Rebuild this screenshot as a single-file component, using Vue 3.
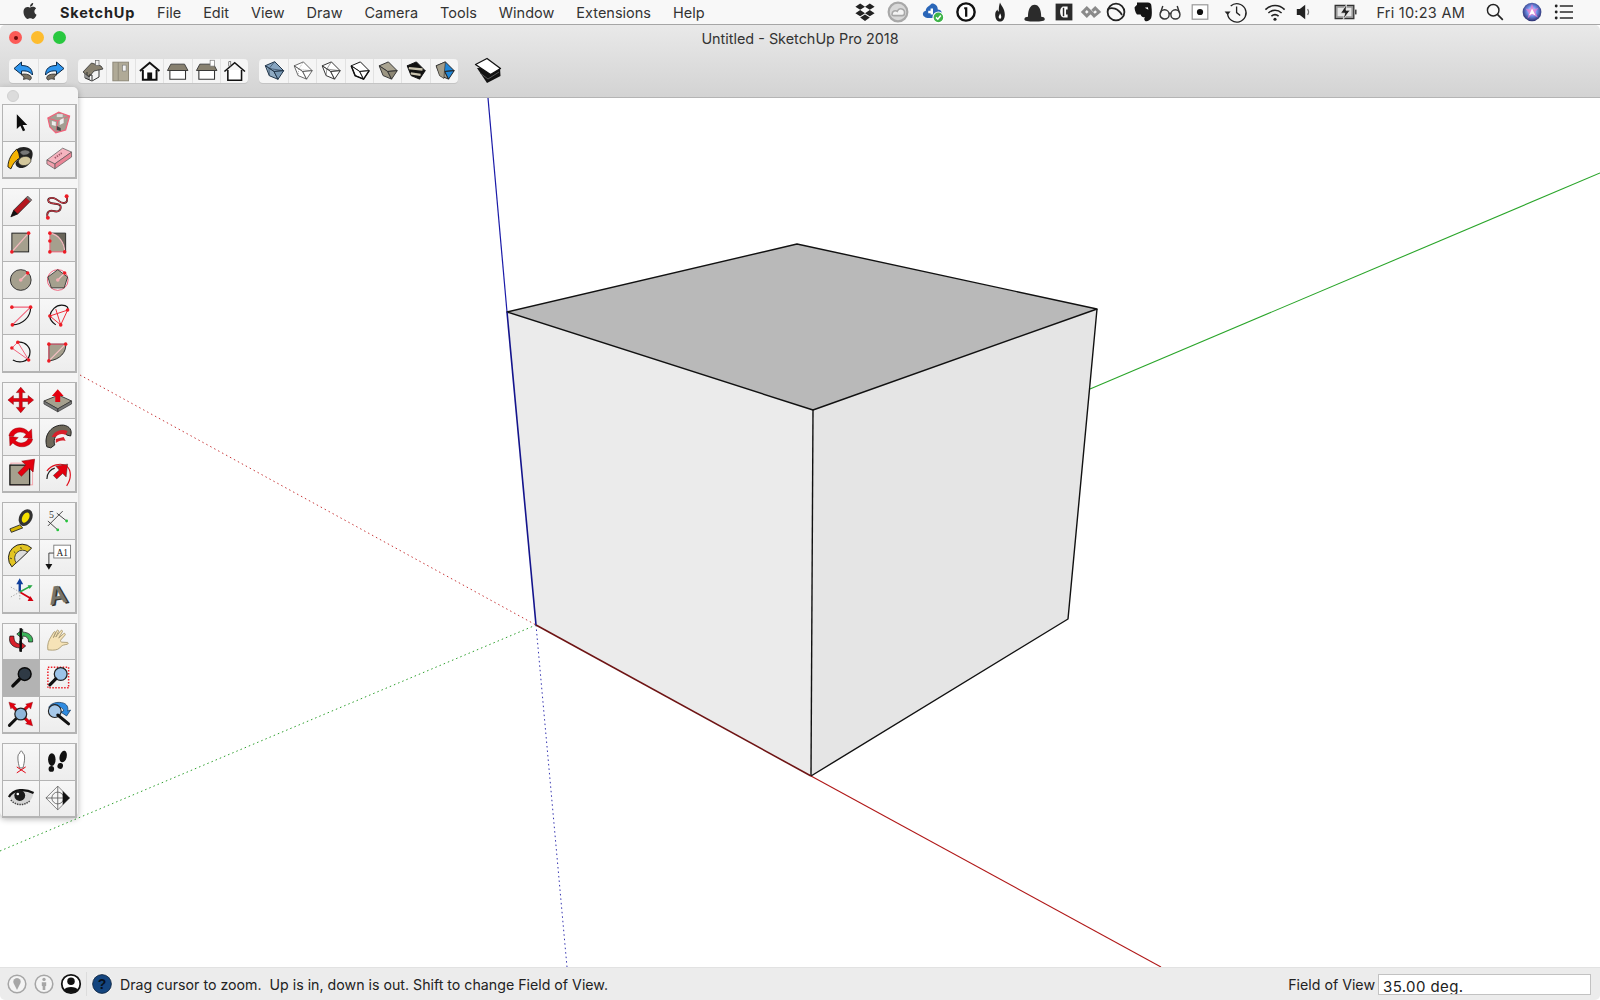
<template>
  <div class="screen">
    <div class="menubar">
      <svg class="apple" viewBox="0 0 24 24"><path :d="applePath" /></svg>
      <span class="menu-app">SketchUp</span>
      <span v-for="m in menus" :key="m" class="menu-item">{{ m }}</span>
      <div class="menu-right">
        <span v-for="s in statusIcons" :key="s.id" class="status-slot" :style="{ width: s.w + 'px' }">
          <svg viewBox="0 0 20 20" width="24" height="24" v-html="s.svg"></svg>
        </span>
        <span class="clock">Fri 10:23 AM</span>
        <span v-for="s in endIcons" :key="s.id" class="status-slot" :style="{ width: s.w + 'px' }">
          <svg viewBox="0 0 20 20" width="24" height="24" v-html="s.svg"></svg>
        </span>
      </div>
    </div>

    <div class="window-head">
      <div class="titlebar">
        <div class="lights">
          <span class="light red"><i></i></span>
          <span class="light yellow"></span>
          <span class="light green"></span>
        </div>
        <div class="title">Untitled - SketchUp Pro 2018</div>
      </div>
      <div class="toolbar">
        <div v-for="(g, i) in toolbarGroups" :key="i" class="tb-group">
          <button v-for="b in g" :key="b.id" class="tb-btn">
            <svg viewBox="0 0 28 24" width="28" height="24" v-html="b.svg"></svg>
          </button>
        </div>
        <svg class="shadow-toggle" viewBox="0 0 30 28" width="30" height="28" v-html="shadowIcon"></svg>
      </div>
    </div>

    <div class="canvas">
      <svg class="scene" viewBox="0 98 1600 869" width="1600" height="869">
        <line x1="80" y1="375" x2="536" y2="625" stroke="#c8383a" stroke-width="1" stroke-dasharray="1.5 3" />
        <line x1="0" y1="851" x2="536" y2="625" stroke="#2ca02c" stroke-width="1" stroke-dasharray="1.5 3" />
        <line x1="536" y1="625" x2="567" y2="967" stroke="#3333b0" stroke-width="1" stroke-dasharray="1.5 3" />
        <line x1="488" y1="98" x2="507" y2="312" stroke="#1a1aa8" stroke-width="1.2" />
        <line x1="1090" y1="389" x2="1600" y2="173" stroke="#2aa52a" stroke-width="1.1" />
        <line x1="811" y1="776" x2="1161" y2="967" stroke="#b01818" stroke-width="1.1" />
        <polygon points="507,312 813,410 811,776 536,625" fill="#ebebeb" />
        <polygon points="813,410 1097,309 1068,619 811,776" fill="#e5e5e5" />
        <polygon points="507,312 797,244 1097,309 813,410" fill="#b9b9b9" />
        <g fill="none" stroke="#111" stroke-width="1.4" stroke-linejoin="round">
          <polygon points="507,312 797,244 1097,309 813,410" />
          <line x1="813" y1="410" x2="811" y2="776" />
          <polyline points="1097,309 1068,619 811,776" />
        </g>
        <line x1="507" y1="312" x2="536" y2="625" stroke="#14148c" stroke-width="1.6" />
        <line x1="536" y1="625" x2="811" y2="776" stroke="#6e1414" stroke-width="1.6" />
      </svg>
    </div>

    <div class="statusbar">
      <div class="status-icons">
        <svg viewBox="0 0 20 20" width="22" height="22">
          <circle cx="10" cy="10" r="8" fill="#f4f4f4" stroke="#a6a6a6" stroke-width="1.4" />
          <path d="M10 15.5 L6.8 9 A3.4 3.4 0 1 1 13.2 9Z" fill="#a6a6a6" />
        </svg>
        <svg viewBox="0 0 20 20" width="22" height="22">
          <circle cx="10" cy="10" r="8" fill="#f4f4f4" stroke="#a6a6a6" stroke-width="1.4" />
          <circle cx="10" cy="5.8" r="1.5" fill="#a6a6a6" />
          <path d="M8 8.5h4v3l-.8.5v3.500H8.800V12L8 11.500Z" fill="#a6a6a6" />
        </svg>
        <svg viewBox="0 0 20 20" width="22" height="22">
          <circle cx="10" cy="10" r="8.4" fill="#fff" stroke="#111" stroke-width="1.6" />
          <circle cx="10" cy="7.4" r="3.4" fill="#111" />
          <path d="M3.6 15.4C5 11.8 15 11.8 16.4 15.4 14 18.8 6 18.8 3.6 15.4Z" fill="#111" />
        </svg>
        <span class="status-sep"></span>
        <svg viewBox="0 0 22 22" width="22" height="22">
          <circle cx="11" cy="11" r="10.6" fill="#f8f8f8" />
          <circle cx="11" cy="11" r="9.4" fill="#14457f" stroke="#0c2037" stroke-width=".8" />
          <text x="11" y="16" text-anchor="middle" font-size="14" font-weight="700" fill="#07101d" font-family="Liberation Sans, sans-serif">?</text>
        </svg>
      </div>
      <span class="status-text">Drag cursor to zoom.&nbsp; Up is in, down is out. Shift to change Field of View.</span>
      <span class="vcb-label">Field of View</span>
      <div class="vcb-input"><span>35.00 deg.</span></div>
    </div>

    <div class="palette">
      <div class="palette-head"><span class="palette-dot"></span></div>
      <div v-for="(g, i) in paletteGroups" :key="i" class="tool-group">
        <button v-for="t in g" :key="t.id" class="tool" :class="{ active: t.active }">
          <svg viewBox="0 0 36 36" width="36" height="36" v-html="t.svg"></svg>
        </button>
      </div>
    </div>
  </div>
</template>

<script setup>
const applePath =
  'M12.152 6.896c-.948 0-2.415-1.078-3.96-1.04-2.04.027-3.91 1.183-4.961 3.014-2.117 3.675-.546 9.103 1.519 12.09 1.013 1.454 2.208 3.09 3.792 3.039 1.52-.065 2.09-.987 3.935-.987 1.831 0 2.35.987 3.96.948 1.637-.026 2.676-1.48 3.676-2.948 1.156-1.688 1.636-3.325 1.662-3.415-.039-.013-3.182-1.221-3.22-4.857-.026-3.04 2.48-4.494 2.597-4.559-1.429-2.09-3.623-2.324-4.39-2.376-2-.156-3.675 1.09-4.61 1.09zM15.53 3.83c.843-1.012 1.4-2.427 1.245-3.83-1.207.052-2.662.805-3.532 1.818-.78.896-1.454 2.338-1.273 3.714 1.338.104 2.715-.688 3.559-1.701'

const menus = ['File', 'Edit', 'View', 'Draw', 'Camera', 'Tools', 'Window', 'Extensions', 'Help']

const statusIcons = [
  { id: 'dropbox', w: 33, svg: '<path fill="#222" d="M6 3l4 2.600L6 8.200 2 5.600zM14 3l4 2.600-4 2.600-4-2.600zM6 8.400l4 2.600-4 2.600-4-2.600zM14 8.400l4 2.600-4 2.600-4-2.600zM6 14.600l4-2.600 4 2.600-4 2.800z"/>' },
  { id: 'cc', w: 35, svg: '<circle cx="10" cy="10" r="7.800" fill="#d8d8d8" stroke="#a8a8a8" stroke-width="1.800"/><path d="M5 12c0-3 3-3.600 4.400-2.600C11 5.600 16 7.400 15.400 11c0 1.400-1 2-2 2H6.600C5.600 13 5 12.600 5 12z" fill="#f4f4f4" stroke="#a8a8a8" stroke-width="1.300"/>' },
  { id: 'cloud', w: 33, svg: '<path fill="#2a66b8" d="M3 14c-2-1-2-4.400 1-5 0-3 3-4 5-6 3 0 5 2 5 5 3 0 4 3 3 5-1 2-3 2-5 2H6c-1 0-2 0-3-1z"/><path fill="#fff" d="M8 7h2v5H8zM6 9h2v2H6z"/><circle cx="14.500" cy="14.500" r="4.500" fill="#3fb44a" stroke="#fff"/><path d="M12.500 14.500l1.500 1.500 2.500-3" fill="none" stroke="#fff" stroke-width="1.300"/>' },
  { id: 'onepass', w: 34, svg: '<circle cx="10" cy="10" r="7.200" fill="#fff" stroke="#111" stroke-width="2"/><path d="M8.500 6h2.600v8H9.200V7.800H8.500z" fill="#111"/>' },
  { id: 'flame', w: 34, svg: '<path fill="#222" d="M10 2c1 3 4 5 4 10 0 4-2 6-4 6s-4-2-4-6c0-2 1-3 2-4 0 2 1 2 1 1 0-2 0-4 1-7z"/><path fill="#fff" d="M10 11c1 2 1.500 3 .6 4.500-1 .6-2-.6-1.600-1.900.3-.8.800-1.400 1-2.600z"/>' },
  { id: 'bowler', w: 30, svg: '<path fill="#2b2b2b" d="M5 14c0-6 2-10 5.500-10S16 8 16 14c1.500 0 3 .7 3 2 0 1.500-3 2-8.500 2S2 17.500 2 16c0-1.300 1.500-2 3-2z"/>' },
  { id: 'cbox', w: 27, svg: '<rect x="3" y="3" width="14" height="14" fill="#2b2b2b"/><path d="M13 5.500H9.500C8 5.500 6.800 7.500 6.800 10s1.200 4.500 2.700 4.500H13v-2.500h-1.300V8H13z" fill="#fff"/><rect x="9" y="6.500" width="1.200" height="7" fill="#2b2b2b"/>' },
  { id: 'chain', w: 25, svg: '<path d="M6.500 5L1.500 10l5 5 3.200-3.200-1.800-1.800L6.500 11.500 5 10l1.500-1.600L12.500 15l6-5-5-5-3.200 3.200 1.800 1.800 1.400-1.500 1.500 1.500-1.800 1.500z" fill="#8a8a8a"/>' },
  { id: 'ring', w: 27, svg: '<circle cx="10" cy="10" r="7" fill="none" stroke="#222" stroke-width="1.500"/><path d="M3.500 7.500c3-1.500 8-.8 11.500 5" fill="none" stroke="#222" stroke-width="1.500"/>' },
  { id: 'evernote', w: 27, svg: '<path fill="#151515" d="M5 2h9c2 0 3 1 3 3 .5 4 .6 8-.2 10-.8 2-3.500 3.200-5 2.400-1-.6-1-2.400 0-3-2 0-3.500-.6-3.800-2.400H5C3.500 10 3 8 3 6l2-2z"/><path fill="#fff" d="M11.500 6.500l2.500-.5.500 2.200z"/>' },
  { id: 'glasses', w: 30, svg: '<g fill="none" stroke="#333" stroke-width="1.200"><circle cx="5.500" cy="12" r="3.800"/><circle cx="14.500" cy="12" r="3.800"/><path d="M9.300 11.500c.5-.6.900-.6 1.400 0M2 11l2-6M18 11l-2-6"/></g>' },
  { id: 'recbox', w: 36, svg: '<rect x="3.500" y="4" width="13" height="12" fill="#fff" stroke="#999"/><circle cx="10" cy="10" r="2.600" fill="#111"/>' },
  { id: 'timemachine', w: 39, svg: '<g fill="none" stroke="#222" stroke-width="1.100"><path d="M5.600 5A7.700 7.700 0 1 1 3 11"/><path d="M10.500 5.500v5l3 2.500"/></g><path d="M0.500 9.500h5l-2.500 3z" fill="#222"/>' },
  { id: 'wifi', w: 29, svg: '<g fill="none" stroke="#222" stroke-width="1.300"><path d="M2 8c4.500-4.500 11.500-4.500 16 0"/><path d="M4.500 10.800c3.200-3 7.800-3 11 0"/><path d="M7 13.400c1.800-1.500 4.200-1.500 6 0"/></g><circle cx="10" cy="16" r="1.300" fill="#222"/>' },
  { id: 'volume', w: 42, svg: '<path fill="#222" d="M4 7.500h2.500L11 4v12L6.500 12.500H4z"/><path d="M13 7.500c1 1.500 1 3.500 0 5" fill="none" stroke="#777" stroke-width="1"/>' },
  { id: 'battery', w: 42, svg: '<rect x="1" y="4.500" width="15.500" height="11" fill="#999" stroke="#333" stroke-width="1.100"/><rect x="3" y="6.500" width="11.500" height="7" fill="#e6e6e6"/><path d="M10.500 3.500L5.500 11h3.500L7.500 16.500l6-8H10z" fill="#222" stroke="#f7f7f7" stroke-width=".6"/><rect x="17.500" y="8" width="1.300" height="4" fill="#444"/>' },
]

const endIcons = [
  { id: 'search', w: 37, svg: '<circle cx="8.500" cy="8.500" r="4.800" fill="none" stroke="#222" stroke-width="1.200"/><path d="M12 12l4.500 4.500" stroke="#222" stroke-width="1.400"/>' },
  { id: 'siri', w: 32, svg: '<defs><radialGradient id="siri" cx=".5" cy=".45" r=".6"><stop offset="0" stop-color="#fff"/><stop offset=".45" stop-color="#6f8fe8"/><stop offset="1" stop-color="#1d1a55"/></radialGradient></defs><circle cx="10" cy="10" r="7.800" fill="url(#siri)"/><path d="M10 3l1.500 5 4 -1.500-2.600 3.500 2 4.500-4.900-2.500L6.300 15.500 7.500 11l-3-4 4 1z" fill="#e87bd0" opacity=".75"/><path d="M10 7l3 6-3-1.500L7.500 13z" fill="#fff"/>' },
  { id: 'list', w: 24, svg: '<g fill="#222"><circle cx="3.500" cy="5" r="1.200"/><circle cx="3.500" cy="10" r="1.200"/><circle cx="3.500" cy="15" r="1.200"/><rect x="6.500" y="4.400" width="11" height="1.200"/><rect x="6.500" y="9.400" width="11" height="1.200"/><rect x="6.500" y="14.400" width="11" height="1.200"/></g>' },
]

// little tilted cube used by the face style buttons
function styleCube(top, left, right, line, extra = '', width = 1) {
  return `<g stroke="${line}" stroke-width="${width}" stroke-linejoin="round">
    <polygon points="5.300,6.700 14.700,2.700 23.700,11.700 14,12.500" fill="${top}"/>
    <polygon points="5.300,6.700 14,12.500 18,20.300 9.300,16.700" fill="${left}"/>
    <polygon points="14,12.500 23.700,11.700 18,20.300" fill="${right}"/>
  </g>${extra}`
}

const house = (body, roof, line = '#333', flag = false) => `
  <path d="M6 11.500h16v9H6z" fill="${body}" stroke="${line}" stroke-width="1.100"/>
  <path d="M3.500 11.500L7 5h14l3.500 6.500z" fill="${roof}" stroke="${line}" stroke-width=".9"/>
  ${flag ? '<rect x="17.500" y="1" width="4.500" height="6" fill="#fff" stroke="#777" stroke-width=".7"/>' : ''}`

const toolbarGroups = [
  [
    { id: 'undo', svg: '<path d="M4 9.500L11.500 3v3.500c7 0 11 3 11 9.500-3-3.500-6-4.500-11-4v3.500z" fill="#2f96ee" stroke="#0c2a4a" stroke-width="1" stroke-linejoin="round"/><path d="M11 15.500c3-1 8-.5 10 2 .8 1.500 0 3.500-1.500 3.500-1.500-1.500-4-1.500-6-.5l.5-2.500z" fill="#7a7263" stroke="#2b2b2b" stroke-width=".8"/>' },
    { id: 'redo', svg: '<path d="M25 9.500L17.500 3v3.500c-7 0-11 3-11 9.500 3-3.500 6-4.500 11-4v3.500z" fill="#2f96ee" stroke="#0c2a4a" stroke-width="1" stroke-linejoin="round"/><path d="M18 15.500c-3-1-8-.5-10 2-.8 1.500 0 3.500 1.500 3.500 1.500-1.500 4-1.500 6-.5l-.5-2.500z" fill="#7a7263" stroke="#2b2b2b" stroke-width=".8"/>' },
  ],
  [
    { id: 'iso', svg: '<path d="M7 12v7l7 3 7-4v-7L15 6z" fill="#f4f4f4" stroke="#333"/><path d="M5 13L13.500 4 23 7l2 3-9 2-5 6z" fill="#87806f" stroke="#333" stroke-width=".8"/><path d="M9 13v7" stroke="#333"/><rect x="17.500" y="1.500" width="3.500" height="5" fill="#eee" stroke="#666" stroke-width=".7"/><path d="M11 21v-5h3v5" fill="none" stroke="#333"/>' },
    { id: 'top', svg: '<rect x="6" y="3" width="16" height="19" fill="#b0aa97" stroke="#8e8878" stroke-width="1"/><path d="M11.500 3v19" stroke="#8e8878"/><rect x="16" y="6" width="3.500" height="6" fill="#f4f4f4" stroke="#777" stroke-width=".6"/>' },
    { id: 'front', svg: '<path d="M4 12L14 3.500 24 12" fill="none" stroke="#111" stroke-width="2"/><path d="M7 11v10h14V11" fill="#fff" stroke="#111" stroke-width="2"/><rect x="11.500" y="13.500" width="5" height="7.500" fill="#111"/>' },
    { id: 'right', svg: house('#fff', '#87806f') },
    { id: 'back', svg: house('#fff', '#87806f', '#333', true) },
    { id: 'left', svg: '<path d="M3.500 12.500L14 3.500l10.500 9" fill="none" stroke="#111" stroke-width="1.600"/><path d="M7 11v10.500h14V11" fill="#fff" stroke="#111" stroke-width="1.600"/><rect x="8" y="2.500" width="2" height="4.500" fill="#fff" stroke="#333" stroke-width=".6"/>' },
  ],
  [
    { id: 'xray', svg: styleCube('#86a4c0', '#8eaac2', '#7a9ab6', '#22364a', '<path d="M9 9.500l.3 7.200M9 9.500l14.700 2.200M9 9.500L14.700 2.700" fill="none" stroke="#22364a" stroke-width=".6"/>') },
    { id: 'wire', svg: styleCube('#fff', '#fff', '#fff', '#444', '<path d="M10 10l-.7 6.700M10 10l13.700 1.700M10 10l4.700-7.300" fill="none" stroke="#777" stroke-width=".5" stroke-dasharray="1 1"/>', 0.8) },
    { id: 'hidden', svg: styleCube('#fff', '#fff', '#fff', '#333', '<path d="M10 10l-.7 6.700M10 10l13.700 1.700M10 10l4.700-7.300" fill="none" stroke="#555" stroke-width=".6"/>') },
    { id: 'plain', svg: styleCube('#fff', '#fff', '#fff', '#111', '<path d="M5.300 6.700l4 10 8.700 3.600 5.700-8.600" fill="none" stroke="#111" stroke-width="1.500"/>') },
    { id: 'shaded', svg: styleCube('#aaa491', '#9c9683', '#8d8774', '#333') },
    { id: 'mono', svg: styleCube('#111', '#111', '#111', '#111', '<path d="M7 9l14 1.500M9 14.500l10 1.500" stroke="#c9c3ae" stroke-width="2.400"/>') },
    { id: 'textured', svg: styleCube('#1f86d8', '#a39d8b', '#1f86d8', '#222', '<path d="M5.300 6.700l9.400-4-1 10-.5 7-4.500-3z" fill="#a39d8b" stroke="#222" stroke-width=".6"/>') },
  ],
]

const shadowIcon = `<path d="M5 11l10 15 13.500-7-.5-7.500z" fill="#111"/>
  <path d="M8 16l8 6 11-7" fill="none" stroke="#666" stroke-width=".8"/>
  <path d="M3.500 7.500L15 1.500l13.500 10-10 6z" fill="#fff" stroke="#111" stroke-width="1.300" stroke-linejoin="round"/>`

const dot = (x, y, r = 1.800) => `<circle cx="${x}" cy="${y}" r="${r}" fill="#ee1c25"/>`
const pink = '#f0627a'

const paletteGroups = [
  [
    { id: 'select', svg: '<path d="M14 9v15l3.600-3.200 2.600 5.600 2.300-1.100-2.600-5.300h4.700z" fill="#0c0c0c"/>' },
    { id: 'component', svg: `<path d="M8 13l11-6 11 4-4 14-10 3-6-6z" fill="#a39e92" stroke="${pink}" stroke-width="1.200"/><path d="M8 13l10 3 12-5M18 16l-2 12" fill="none" stroke="${pink}" stroke-width="1"/><path d="M12 16l4 1v4l-4-1zM20 15l4-2v5l-4 2z" fill="#eee"/><path d="M17 21l4 2v3l-4-1z" fill="#444"/><rect x="17" y="9" width="6" height="3" fill="#ddd"/>` },
    { id: 'paint', svg: '<path d="M14 8c4-3 11-3 15 1 2 3 1 7-1 11-2 5-7 8-11 7-3-1-5-3-4-6l4-4-2-5z" fill="#222"/><ellipse cx="22" cy="20" rx="6.500" ry="4.600" transform="rotate(-12 22 20)" fill="#d3c79c" stroke="#222" stroke-width=".6"/><path d="M17 11c3-3 8-3 10.500 0-1 2-3 3-5 3-2 .5-4 0-5.500-3z" fill="#777" stroke="#222" stroke-width=".6"/><path d="M14 8C9 12 5 19 5 26l3 2c2-5 5-9 9-11l-1-5z" fill="#f5b301" stroke="#111" stroke-width=".9"/>' },
    { id: 'eraser', svg: '<polygon points="7,19 23,7 32,11 15,23" fill="#f6b4bf" stroke="#555" stroke-width=".7"/><polygon points="15,23 32,11 32,16 15,28" fill="#ea8495" stroke="#555" stroke-width=".7"/><polygon points="7,19 15,23 15,28 7,23" fill="#f1a0ad" stroke="#555" stroke-width=".7"/><path d="M15 17l7-5" stroke="#a35a6a" stroke-width="1.800" stroke-dasharray="1.500 1"/>' },
  ],
  [
    { id: 'pencil', svg: '<path d="M8 28l3-7L25 7l4 4-14 14z" fill="#b5161e" stroke="#222" stroke-width=".8"/><path d="M8 28l3-7 4 4z" fill="#111"/><path d="M25 7l4 4-1.500 1.500-4-4z" fill="#777"/>' },
    { id: 'freehand', svg: `<path d="M8 29c-2-5 1-8 5-7s8 1 8-4-8-2-12-5c-2-3 1-5 5-4s6 5 10 5 4-4 3-7" fill="none" stroke="#3a1a1a" stroke-width="1.900"/><path d="M8 29c-2-5 1-8 5-7s8 1 8-4-8-2-12-5c-2-3 1-5 5-4s6 5 10 5 4-4 3-7" fill="none" stroke="#ee4050" stroke-width=".9"/>${dot(8, 29, 2)}${dot(27, 7, 2)}` },
    { id: 'rect', svg: `<rect x="9" y="8" width="17" height="19" fill="#a5a08e" stroke="#222"/><path d="M9 27L26 8" stroke="#f5b9bf" stroke-width="1.300"/>${dot(9, 27)}${dot(26, 8)}` },
    { id: 'rotrect', svg: `<path d="M10 8h16v19h-1c0-9-6-17-15-19z" fill="#69655a" stroke="#222" stroke-width=".9"/><path d="M10 8c9 1 15 10 15 19H10z" fill="#a5a08e"/><path d="M10 8c9 1 15 10 15 19" fill="none" stroke="#f5b9bf" stroke-width="1.200"/><path d="M10 8v19h15" fill="none" stroke="${pink}" stroke-width="1"/>${dot(10, 8)}${dot(10, 16)}${dot(10, 27)}${dot(25, 27)}` },
    { id: 'circle', svg: `<circle cx="18" cy="18" r="10.500" fill="#a5a08e" stroke="#333"/><path d="M18 18l7-7" stroke="#f7c1c5" stroke-width="1.300"/><circle cx="18" cy="18" r="1.800" fill="#f5adb3"/>${dot(25, 11)}` },
    { id: 'polygon', svg: `<circle cx="18" cy="18" r="10.500" fill="none" stroke="${pink}" stroke-width="1"/><path d="M18 7.500L28 15l-3.500 11h-13L8 15z" fill="#a5a08e" stroke="#333" stroke-width=".9"/><path d="M18 18l7-7" stroke="#f7c1c5" stroke-width="1.300"/><circle cx="18" cy="18" r="1.800" fill="#f5adb3"/>${dot(25, 11)}` },
    { id: 'arc', svg: `<path d="M9 9h19L9.500 27" fill="none" stroke="${pink}" stroke-width="1.100"/><path d="M28 9c0 10-8 18-18.500 18" fill="none" stroke="#111" stroke-width="1.200"/>${dot(9, 9)}${dot(28, 9)}${dot(9.500, 27)}` },
    { id: 'arc2', svg: `<path d="M10 18c1-6 6-11 12-11s7 3 6 5M10 18c0 4 3 7 6 9" fill="none" stroke="#111" stroke-width="1.200"/><path d="M10 18l18-6L21 27zM16 11l5 16" fill="none" stroke="#ee2b37" stroke-width="1"/>${dot(10, 18)}${dot(28, 12)}${dot(21, 27)}` },
    { id: 'arc3', svg: `<path d="M15 7c8-1 14 6 12 13-2 7-10 9-17 5" fill="none" stroke="#111" stroke-width="1.200"/><path d="M9 13l17 12M15 7l11 18M9 13l6-6" fill="none" stroke="${pink}" stroke-width="1"/>${dot(9, 13)}${dot(15, 7)}${dot(26, 25)}` },
    { id: 'pie', svg: `<path d="M9 9h17c1 8-6 16-17 17z" fill="#a5a08e" stroke="#222" stroke-width=".9"/><path d="M9 26L26 9" stroke="#f7c1c5" stroke-width="1.300"/><path d="M9 26V9h17" fill="none" stroke="${pink}"/>${dot(9, 26)}${dot(9, 9)}${dot(26, 9)}` },
  ],
  [
    { id: 'move', svg: '<path fill="#e3000f" stroke="#7a0008" stroke-width=".5" d="M18 5l4.500 5.500h-3v6h6v-3l5.500 4.500-5.500 4.500v-3h-6v6h3L18 31l-4.500-5.500h3v-6h-6v3L5 18l5.500-4.500v3h6v-6h-3z"/>' },
    { id: 'pushpull', svg: '<path d="M4 19l15-6 13 6-14 8z" fill="#a5a08e" stroke="#333" stroke-width=".9"/><path d="M4 19v3l14 8v-3zM32 19v3l-14 8v-3z" fill="#777" stroke="#333" stroke-width=".7"/><path d="M18 7l6 7h-3.500v6h-5v-6H12z" fill="#e3000f"/>' },
    { id: 'rotate', svg: '<path d="M6 17c1-8 13-12 20-4l3-3 .5 9.500-9-1 3-3c-4-4-11-3-13 2zM30 20c-1 8-13 11-20 4l-3 3-.5-9.500 9 1-3 3c4 4 11 3 13-2z" fill="#e3000f" stroke="#880008" stroke-width=".4"/>' },
    { id: 'follow', svg: '<path d="M7 28C3 15 13 5 24 6c6 1 9 5 7 11l-4-1c0-4-8-3-11 1-2 3-2 7-1 9l-4 3z" fill="#6e685a" stroke="#222" stroke-width="1"/><path d="M12 18c2-5 9-9 16-6l-2 4c-3-2-8-1-10 2z" fill="#d8202b"/><path d="M16 24c3-2 5-3 10-2l-2-4-8 2z" fill="#d8202b"/>' },
    { id: 'scale', svg: `<rect x="8" y="8" width="22" height="22" fill="none" stroke="#f3a5ac"/><rect x="7" y="10" width="20" height="20" fill="#a5a08e" stroke="#111" stroke-width="1.300"/><path d="M32 4l-1.500 13-3.800-3.800-8 8-3.500-3.500 8-8L19 6z" fill="#e3000f" stroke="#8a0008" stroke-width=".6"/>` },
    { id: 'offset', svg: '<path d="M7 16C11 10 21 7 27 11c5 4 5 13 0 20" fill="none" stroke="#e0101c" stroke-width="1.200"/><path d="M7 24c0-6 4-10 8-11" fill="none" stroke="#222" stroke-width="1.200"/><path d="M28 9l-1.500 13-3.500-3.500-6 5.500-3.500-3.500 6-5.500L16 11z" fill="#e3000f" stroke="#333" stroke-width=".5"/>' },
  ],
  [
    { id: 'tape', svg: '<path d="M17 22L7 26l1.500 3.500L20 25z" fill="#d5b400" stroke="#222" stroke-width=".9"/><ellipse cx="23" cy="14.500" rx="6.500" ry="9" transform="rotate(28 23 14.500)" fill="#333"/><ellipse cx="23" cy="14.500" rx="3.400" ry="5.600" transform="rotate(28 23 14.500)" fill="#f5e000"/>' },
    { id: 'dimension', svg: '<path d="M8 23L23 8M17 10l10 8M8 18l10 9" stroke="#333" fill="none" stroke-width=".9"/><circle cx="27" cy="18" r="1.400" fill="#23c43a"/><circle cx="18" cy="27" r="1.400" fill="#23c43a"/><text x="9" y="15" font-size="10" font-family="Liberation Serif, serif" fill="#333">5</text>' },
    { id: 'protractor', svg: '<path d="M9 28A13.800 13.800 0 0 1 29 9Z" fill="#e3c523" stroke="#222"/><path d="M13.500 24A8 8 0 0 1 25 13Z" fill="#dcdcdc" stroke="#222" stroke-width=".8"/><path d="M7 19l2 .8M11 12.500l1.500 1.300M18 8l.5 2" stroke="#222" stroke-width=".8"/>' },
    { id: 'text', svg: '<rect x="14" y="6" width="17" height="13" fill="#fff" stroke="#777" stroke-width=".9"/><text x="22.500" y="16.500" text-anchor="middle" font-size="9.500" font-family="Liberation Serif, serif" fill="#222">A1</text><path d="M14 14H9v12" fill="none" stroke="#444"/><path d="M5.500 25h7L9 31z" fill="#111"/>' },
    { id: 'axes', svg: '<path d="M17 16V5" stroke="#0f3f9c" stroke-width="2.400"/><path d="M17 2l3.500 6h-7z" fill="#0f3f9c"/><path d="M17 16l12 7" stroke="#d4000f" stroke-width="1.800"/><path d="M31 25l-6 0 2.500-5z" fill="#d4000f"/><path d="M17 16l11-6" stroke="#27a944" stroke-width="1.600"/><path d="M30 9l-5 0 2 4z" fill="#27a944"/><path d="M17 16l-9-5M17 16l-9 5M17 16v9" stroke="#aaa" stroke-dasharray="1.500 1.500"/>' },
    { id: 'text3d', svg: '<text x="19" y="29" text-anchor="middle" font-size="27" font-weight="700" fill="#33332f" font-family="Liberation Sans, sans-serif" transform="rotate(-10 18 18)">A</text><text x="17.500" y="27.500" text-anchor="middle" font-size="26" font-weight="700" fill="#77756b" font-family="Liberation Sans, sans-serif" transform="rotate(-10 18 18)">A</text>' },
  ],
  [
    { id: 'orbit', svg: '<path d="M30 19C31 13 26 9 20 9V6l-6 5 6 5v-3c4 0 6 2 6 6z" fill="#3bb55a" stroke="#111" stroke-width=".7"/><path d="M7 13c-2 7 3 12 10 12v3l6-5-6-5v3c-4 0-6-3-6-8z" fill="#d8202b" stroke="#111" stroke-width=".7"/><path d="M18 5v24" stroke="#0a0a0a" stroke-width="2.400"/>' },
    { id: 'pan', svg: '<path d="M8 27C7 22 9 17 11 14l3-5c.6-1 2-.6 1.600.6l-2 5 3.400-7.100c.6-1 2.200-.6 1.800.8L16 14l5-6.400c.8-1 2.300-.3 1.700 1L19 15l5-4.500c1-.8 2.200.4 1.400 1.500L21 17c-.5 1 0 2 1 2.200l6 .3c1 .4.6 1.600-.4 1.800-3 .6-5 1-6 2-2 3-5 4-9 4z" fill="#f6e3b7" stroke="#a89a72" stroke-width=".9"/>' },
    { id: 'zoom', active: true, svg: '<circle cx="22" cy="14" r="6.500" fill="#2f3a45" stroke="#0a0a0a" stroke-width="1.500"/><path d="M16.500 19.500L10 26" stroke="#0a0a0a" stroke-width="3.400" stroke-linecap="round"/>' },
    { id: 'zoomwin', svg: `<rect x="8" y="7" width="21" height="21" fill="none" stroke="#ee1c25" stroke-width="1.500" stroke-dasharray="1.500 1.500"/><circle cx="21" cy="14" r="6.500" fill="#9cc3e8" stroke="#222" stroke-width="1.300"/><path d="M16 19l-6 6" stroke="#111" stroke-width="3.200" stroke-linecap="round"/>` },
    { id: 'extents', svg: '<path d="M6 6l7 2-2 1.500 4 4-2 2-4-4L8 13zM30 6l-2 7-1.500-2-4 4-2-2 4-4L23 8zM30 30l-7-2 1.500-1.500-3.500-3.500 2-2 3.500 3.500L28 23z" fill="#e3000f" stroke="#7a0008" stroke-width=".4"/><path d="M13 23l-6.500 6.500" stroke="#111" stroke-width="3" stroke-linecap="round"/><circle cx="18" cy="18" r="6" fill="#8fb6da" stroke="#222" stroke-width="1.300"/>' },
    { id: 'previous', svg: '<path d="M9 11c2-4 9-6 15-4 3 1 5 4 4 8l3-1-4 6-6-4 3-1c0-3-3-4-6-4l1 3-8 2z" fill="#2f8be0" stroke="#173f66" stroke-width=".8"/><circle cx="15" cy="15" r="6.500" fill="#a7c9ea" stroke="#222" stroke-width="1.100"/><path d="M18 19l11 9" stroke="#111" stroke-width="3" stroke-linecap="round"/>' },
  ],
  [
    { id: 'camera', svg: '<path d="M18.500 7c1 0 1.600.8 1.400 2 1.500.5 2 2 2 5 0 4-1 7-1.600 10h-3.600c-.6-3-1.600-6-1.600-10 0-3 .5-4.500 2-5-.2-1.200.4-2 1.400-2z" fill="#fff" stroke="#666" stroke-width=".9"/><path d="M14 23l9 6M23 23l-9 6" stroke="#e3000f" stroke-width="1"/>' },
    { id: 'walk', svg: '<ellipse cx="12" cy="15.500" rx="3.800" ry="6.500" fill="#111"/><ellipse cx="11.500" cy="25" rx="2.800" ry="3" fill="#111"/><ellipse cx="23.500" cy="12.500" rx="3.600" ry="6" transform="rotate(15 23.500 12.500)" fill="#111"/><ellipse cx="20.500" cy="22" rx="2.800" ry="3" transform="rotate(15 20.500 22)" fill="#111"/>' },
    { id: 'look', svg: '<path d="M6 17C10 9 22 7 31 13c-1 6-5 11-11 12-6 1-11-3-14-8z" fill="#d4d4d4"/><path d="M6 17C11 9 22 8 31 13" fill="none" stroke="#111" stroke-width="2.300"/><circle cx="17" cy="15.500" r="5.500" fill="#1a1a1a"/><circle cx="15" cy="14" r="1.300" fill="#fff"/><path d="M8 20c4 5 12 7 19 1" fill="none" stroke="#444" stroke-width="1.500" stroke-dasharray="1.500 1"/>' },
    { id: 'section', svg: '<path d="M18 6l12 12-12 12L6 18z" fill="#f6f6f6" stroke="#666" stroke-width=".8"/><circle cx="18" cy="18" r="6" fill="none" stroke="#555" stroke-width=".8"/><path d="M6 18h24M18 6v24" stroke="#555" stroke-width=".8"/><path d="M30 18l-7-7v14z" fill="#111"/>' },
  ],
]
</script>

<style>
html,
body {
  margin: 0;
  background: #fff;
}
</style>

<style scoped>
.screen {
  position: relative;
  width: 1600px;
  height: 1000px;
  display: flex;
  flex-direction: column;
  overflow: hidden;
  font-family: Inter, "Liberation Sans", sans-serif;
  color: #222;
}
.menubar {
  height: 24px;
  flex: none;
  display: flex;
  align-items: center;
  background: #f8f8f8;
  border-bottom: 1px solid #a6a6a6;
  font-size: 14.5px;
  padding-left: 22px;
}
.apple {
  width: 16px;
  height: 16px;
  margin-top: -3px;
  fill: #333;
}
.menu-app {
  margin-left: 22px;
  font-weight: 700;
  letter-spacing: 0.8px;
}
.menu-item {
  margin-left: 22px;
  color: #333;
}
.menu-right {
  margin-left: auto;
  display: flex;
  align-items: center;
  padding-right: 24px;
}
.status-slot {
  display: flex;
  justify-content: flex-start;
  align-items: center;
  flex: none;
}
.clock {
  margin-right: 18px;
  color: #333;
  letter-spacing: 0.25px;
  white-space: nowrap;
}
.window-head {
  height: 73px;
  flex: none;
  box-sizing: border-box;
  background: linear-gradient(#e9e9e9, #d3d3d3);
  border-bottom: 1px solid #b4b4b4;
  border-radius: 5px 5px 0 0;
}
.titlebar {
  height: 26px;
  position: relative;
  display: flex;
  align-items: center;
  justify-content: center;
}
.lights {
  position: absolute;
  left: 9px;
  top: 6px;
  display: flex;
  gap: 9px;
}
.light {
  width: 13px;
  height: 13px;
  border-radius: 50%;
  display: flex;
  align-items: center;
  justify-content: center;
}
.light i {
  width: 4px;
  height: 4px;
  border-radius: 50%;
  background: #6d0c0c;
}
.red {
  background: #fc5b57;
}
.yellow {
  background: #fdbc2e;
}
.green {
  background: #28c83f;
}
.title {
  font-size: 14.4px;
  color: #333;
}
.toolbar {
  display: flex;
  align-items: center;
  gap: 11px;
  padding: 8px 0 0 9px;
  height: 24px;
}
.tb-group {
  display: flex;
  background: #f5f5f5;
  border-radius: 4px;
  box-shadow: 0 1px 0 #c4c4c4;
}
.tb-btn {
  width: 28.4px;
  height: 24px;
  padding: 0;
  border: 0;
  border-left: 1px solid #e2e2e2;
  background: none;
  display: flex;
  align-items: center;
  justify-content: center;
  box-sizing: border-box;
}
.tb-btn:first-child {
  border-left: 0;
}
.tb-group:first-child .tb-btn {
  width: 29px;
}
.shadow-toggle {
  margin-left: 3px;
}
.canvas {
  flex: 1;
  position: relative;
  background: #fff;
  min-height: 0;
}
.scene {
  position: absolute;
  inset: 0;
  display: block;
}
.statusbar {
  height: 33px;
  flex: none;
  box-sizing: border-box;
  display: flex;
  align-items: center;
  background: #ececec;
  border-top: 1px solid #e2e2e2;
  padding: 0 9px 0 6px;
  font-size: 14.2px;
  border-radius: 0 0 5px 5px;
}
.status-icons {
  display: flex;
  align-items: center;
  gap: 5px;
}
.status-sep {
  width: 1px;
  height: 24px;
  background: #dcdcdc;
  margin: 0 -1px;
}
.status-text {
  margin-left: 7px;
  color: #222;
  flex: 1;
  white-space: nowrap;
}
.vcb-label {
  margin-right: 3px;
  color: #222;
}
.vcb-input {
  width: 213px;
  height: 21px;
  box-sizing: border-box;
  background: #fff;
  border: 1px solid #c2c2c2;
  overflow: hidden;
  padding-left: 4px;
  font-size: 15px;
  line-height: 24px;
  letter-spacing: 0.4px;
}
.palette {
  position: absolute;
  left: 0;
  top: 87px;
  width: 78px;
  height: 730px;
  box-sizing: border-box;
  background: #f5f5f5;
  border-radius: 0 5px 5px 5px;
  box-shadow: 0 2px 6px rgba(0, 0, 0, 0.3);
  padding: 0 2px;
  z-index: 5;
}
.palette-head {
  height: 17px;
  display: flex;
  align-items: center;
  padding-left: 5px;
}
.palette-dot {
  width: 12px;
  height: 12px;
  border-radius: 50%;
  background: #dcdcdc;
  border: 1px solid #d0d0d0;
  box-sizing: border-box;
}
.tool-group {
  display: grid;
  grid-template-columns: 36.5px 36.5px;
  grid-auto-rows: 36.5px;
  border: 1px solid #b4b4b4;
  margin-bottom: 9px;
  width: 73px;
  background: #b4b4b4;
}
.tool {
  padding: 0;
  border: 0;
  border-right: 1px solid #b4b4b4;
  border-bottom: 1px solid #b4b4b4;
  background: linear-gradient(#f7f7f7, #ededed);
  box-sizing: border-box;
  display: flex;
  align-items: center;
  justify-content: center;
}
.tool.active {
  background: #b3b3b3;
}
</style>
